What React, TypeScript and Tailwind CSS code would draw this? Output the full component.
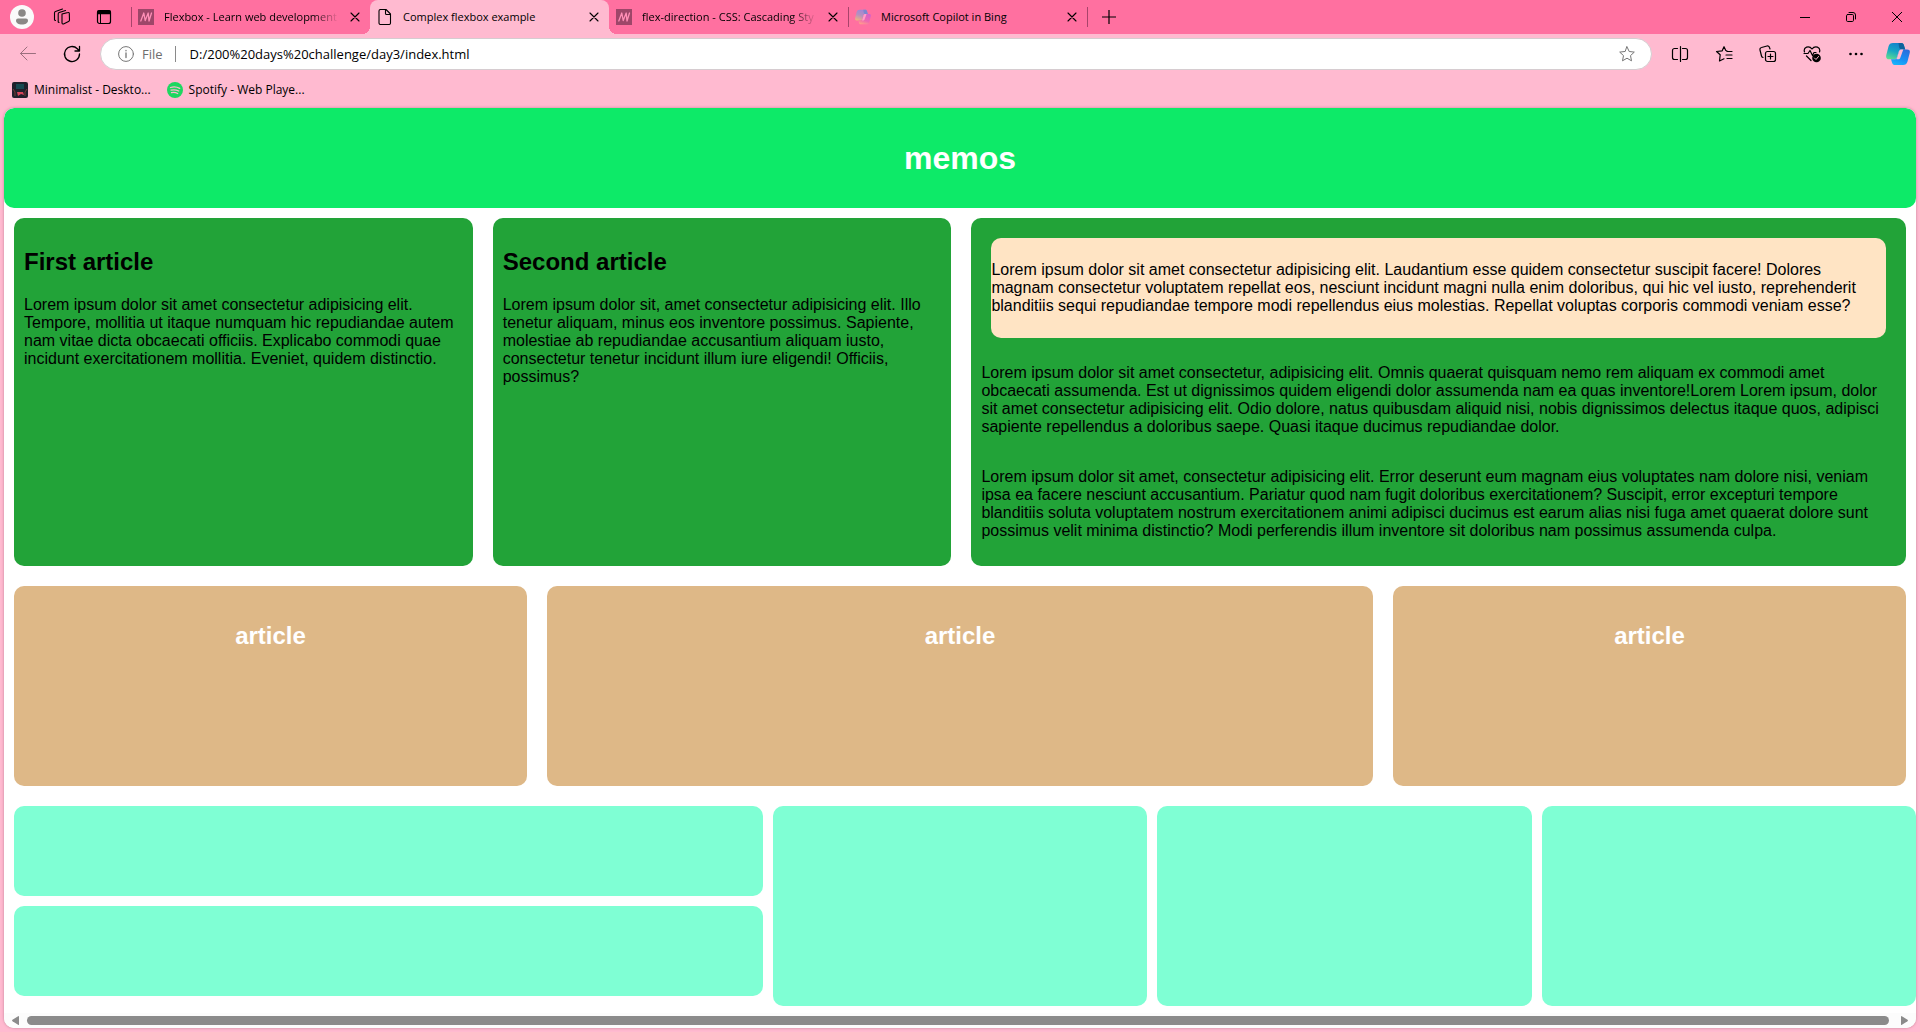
import React from "react";

const fade = "[mask-image:linear-gradient(to_right,black_85%,transparent)]";

function Svg({ size = 20, children, className = "" }: { size?: number; children: React.ReactNode; className?: string }) {
  return (
    <svg width={size} height={size} viewBox={`0 0 ${size} ${size}`} fill="none" stroke="currentColor" strokeWidth="1" strokeLinecap="round" strokeLinejoin="round" className={`shrink-0 ${className}`} aria-hidden="true">
      {children}
    </svg>
  );
}

function MdnIcon() {
  return (
    <Svg size={16} className="bg-[#9e4669]">
      <path d="M2.800 12L5.800 4l1.400 7.500L10.200 4l.8 8L13.500 4" stroke="#ff8fb7" strokeWidth="1.300" />
    </Svg>
  );
}

function FileIcon() {
  return (
    <Svg size={16}>
      <path d="M3.500 .500h5.500l4.500 4.500v9a1.500 1.500 0 0 1-1.500 1.500H3.500A1.500 1.500 0 0 1 2 14V2A1.500 1.500 0 0 1 3.500 .500zM8.500 .500V4.500a1 1 0 0 0 1 1h4" strokeWidth="1.100" />
    </Svg>
  );
}

function CopilotIcon({ size, faded = false }: { size: number; faded?: boolean }) {
  const id = faded ? "tab" : "bar";
  return (
    <svg width={size} height={size} viewBox="0 0 24 24" className="shrink-0" aria-hidden="true">
      <defs>
        <linearGradient id={`${id}-left`} x1="0.6" y1="0" x2="0.2" y2="1">
          <stop offset="0" stopColor={faded ? "#9f86d6" : "#1480cc"} />
          <stop offset="0.5" stopColor={faded ? "#b58fc0" : "#16a6c4"} />
          <stop offset="1" stopColor={faded ? "#efb080" : "#5ddc90"} />
        </linearGradient>
        <linearGradient id={`${id}-right`} x1="0.7" y1="0" x2="0.3" y2="1">
          <stop offset="0" stopColor={faded ? "#d661c8" : "#2a6ddb"} />
          <stop offset="0.6" stopColor={faded ? "#ee68b0" : "#1690f5"} />
          <stop offset="1" stopColor={faded ? "#ff9c8c" : "#18b4fa"} />
        </linearGradient>
      </defs>
      <path d="M11 1h4.500c1.500 0 2 1 2.500 2.500l1.200 4h-3.700c-1.500 0-2.300.7-2.800 2.200L11 15c-.5 1.500-1.500 2.300-3 2.300H3C.5 17.300-.3 15.500.3 13l2.200-8.500C3.200 2 4.500 1 7 1z" fill={`url(#${id}-left)`} />
      <path d="M12.500 1h3c1.500 0 2 1 2.500 2.500l1.200 4h-3.700c-1.300 0-2-.8-2.300-2z" fill={faded ? "#7d86cf" : "#10629b"} />
      <path d="M13 23H8.500C7 23 6.500 22 6 20.500l-1-3.200h3.500c1.500 0 2-.8 2.500-2.300l1.700-5.300c.5-1.500 1.300-2.200 2.800-2.200H21c2.500 0 3.300 1.300 2.700 3.500l-2.200 8.500C20.800 22 19.500 23 17 23z" fill={`url(#${id}-right)`} />
      <path d="M13 9.500c.5-1.400 1.300-2 2.700-2h1.600l-3 8.300c-.4 1-1 1.500-2 1.500h-1.800z" fill={faded ? "#ffa0c8" : "#ffbad0"} />
    </svg>
  );
}

function CloseButton({ label }: { label: string }) {
  return (
    <button aria-label={label} className="grid size-4 shrink-0 place-items-center">
      <Svg size={10}><path d="M1 1l8 8M9 1l-8 8" strokeWidth="1.100" /></Svg>
    </button>
  );
}

function Tab({ icon, title, active = false, fading = false }: { icon: React.ReactNode; title: string; active?: boolean; fading?: boolean }) {
  return (
    <div className={`relative flex h-[34px] w-[239px] items-center px-[7px] ${active ? "rounded-t-lg bg-[#ffbad0]" : ""}`}>
      {active && (
        <>
          <span className="absolute bottom-0 -left-2 size-2 bg-[radial-gradient(circle_at_top_left,transparent_8px,#ffbad0_8px)]" />
          <span className="absolute -right-2 bottom-0 size-2 bg-[radial-gradient(circle_at_top_right,transparent_8px,#ffbad0_8px)]" />
        </>
      )}
      {icon}
      <a href="#" className={`ml-2.5 min-w-0 flex-1 whitespace-nowrap ${fading ? fade : ""}`}>{title}</a>
      <span className="w-2" />
      <CloseButton label={`Close ${title}`} />
    </div>
  );
}

function Divider() {
  return <span className="-mr-px h-5 w-px shrink-0 bg-[#a8446b]" />;
}

function ToolButton({ label, children }: { label: string; children: React.ReactNode }) {
  return <button aria-label={label} className="grid h-8 w-11 place-items-center">{children}</button>;
}

function TabStrip() {
  return (
    <div className="flex h-[34px] items-center bg-[#ff70a0] pl-2.5 text-[11px]">
      <button aria-label="Profile" className="grid size-6 place-items-center rounded-full bg-[#fafafa]">
        <svg width="14" height="16" viewBox="0 0 14 16" fill="#8a8886"><circle cx="7" cy="4" r="3.800" /><path d="M1 11.500a2 2 0 0 1 2-2h8a2 2 0 0 1 2 2c0 2.500-2.500 4-6 4s-6-1.500-6-4z" /></svg>
      </button>
      <button aria-label="Workspaces" className="ml-[18px] grid size-5 place-items-center">
        <Svg size={18}>
          <path d="M9 6l6-1.500a1 1 0 0 1 1.300 1L16.500 12a1.500 1.500 0 0 1-1 1.500L10.500 16A1.200 1.200 0 0 1 9 15zM6 14.500L5.200 14V6A1.500 1.500 0 0 1 6.200 4.500L12.500 2.500M2.500 12.500L1.500 12V5A1.500 1.500 0 0 1 2.500 3.500L9.500 1" strokeWidth="1.100" />
        </Svg>
      </button>
      <button aria-label="Tab actions" className="ml-[22px] grid size-5 place-items-center">
        <Svg size={16}><rect x="1.500" y="1.500" width="13" height="13" rx="2" strokeWidth="1.200" /><path d="M2 2h12v2.500H2z" strokeWidth="1.300" fill="currentColor" /><path d="M4.500 5v9" /></Svg>
      </button>
      <span className="w-[17px]" />
      <Divider />
      <div className="flex items-center">
        <Tab icon={<MdnIcon />} title="Flexbox - Learn web development" fading />
        <Tab icon={<FileIcon />} title="Complex flexbox example" active />
        <Tab icon={<MdnIcon />} title="flex-direction - CSS: Cascading Sty" fading />
        <Divider />
        <Tab icon={<CopilotIcon size={16} faded />} title="Microsoft Copilot in Bing" />
        <Divider />
      </div>
      <button aria-label="New tab" className="ml-3.5 grid size-4 place-items-center"><Svg size={14}><path d="M7 0v14M0 7h14" strokeWidth="1.200" /></Svg></button>
      <div className="ml-auto flex">
        <button aria-label="Minimize" className="grid h-8 w-[46px] place-items-center"><Svg size={10}><path d="M0 5.500h10" /></Svg></button>
        <button aria-label="Restore" className="grid h-8 w-[46px] place-items-center"><Svg size={10}><rect x=".5" y="2.500" width="7" height="7" rx="1.200" /><path d="M3 .5h4A2.500 2.500 0 0 1 9.500 3v4" /></Svg></button>
        <button aria-label="Close window" className="grid h-8 w-[46px] place-items-center"><Svg size={10}><path d="M0 0l10 10M10 0L0 10" /></Svg></button>
      </div>
    </div>
  );
}

function AddressBar() {
  return (
    <div className="flex h-10 items-center pl-[18px]">
      <button aria-label="Back" className="text-[#9b6f7e]"><Svg><path d="M17.500 9.500H2.500M9 3L2.500 9.500 9 16" /></Svg></button>
      <button aria-label="Refresh" className="ml-6"><Svg><path d="M17.500 10a7.500 7.500 0 1 1-2.200-5.300L17.500 7M17.500 2.500V7H13" strokeWidth="1.300" /></Svg></button>
      <div className="ml-[18px] flex h-8 flex-1 items-center rounded-full border border-[#d6ccd0] bg-white pl-[17px] pr-4 text-sm">
        <span className="text-[#767676]"><Svg size={16}><circle cx="8" cy="8" r="7.400" /><path d="M8 7v4.500M8 4.500v.3" strokeWidth="1.300" /></Svg></span>
        <label htmlFor="address" className="ml-2 text-[13px] text-[#6e6e6e]">File</label>
        <span className="ml-3 h-4 w-px bg-[#8a8a8a]" />
        <input id="address" className="ml-3.5 min-w-0 flex-1 bg-transparent text-[13px] text-black outline-none" defaultValue="D:/200%20days%20challenge/day3/index.html" />
        <button aria-label="Add to favorites" className="text-[#767676]"><Svg size={16}><path d="M8 .800l2.200 4.700 5.100.6-3.800 3.500 1 5.200L8 12.200l-4.500 2.600 1-5.200L.7 6.100l5.100-.6z" /></Svg></button>
      </div>
      <div className="ml-1.5 flex">
        <ToolButton label="Split screen"><Svg size={18}><path d="M6.500 3.500H3.500a2 2 0 0 0-2 2v7a2 2 0 0 0 2 2h3M11.500 3.500h3a2 2 0 0 1 2 2v7a2 2 0 0 1-2 2h-3M9.500 1.500v15" strokeWidth="1.200" /></Svg></ToolButton>
        <ToolButton label="Favorites"><Svg size={18}><path d="M12 6L10.800 5.500 9 1.700 7.200 5.800 1.500 6.500 5.200 9.800 4.500 16 9 13.800M12 6.500h5M11 10h6M12 13.500h5" strokeWidth="1.200" /></Svg></ToolButton>
        <ToolButton label="Collections"><Svg size={18}><rect x="6.500" y="6.500" width="10" height="10" rx="2" strokeWidth="1.200" /><path d="M11.500 9v5M9 11.500h5M4 12.500a2 2 0 0 1-1.500-1.500L1 5a2 2 0 0 1 1.500-2.500L8 1a2 2 0 0 1 2.500 1.500L11 4" strokeWidth="1.200" /></Svg></ToolButton>
        <ToolButton label="Browser essentials"><Svg size={18}><path d="M1.500 7C0 2 6 0 9 4c3-4 9-2 7.500 3M1 8.500h4l2-3 2.500 5L11 7.500h2M3.500 11l4.500 4.500" strokeWidth="1.200" /><circle cx="13.500" cy="13" r="4.300" fill="currentColor" stroke="none" /><path d="M11.500 13l1.500 1.500 2.500-3" stroke="#ffbad0" /></Svg></ToolButton>
        <ToolButton label="Settings and more"><Svg size={16}><g fill="currentColor" stroke="none"><circle cx="2.500" cy="8" r="1.300" /><circle cx="8" cy="8" r="1.300" /><circle cx="13.500" cy="8" r="1.300" /></g></Svg></ToolButton>
        <button aria-label="Copilot" className="mr-0.5 grid h-8 w-10 place-items-center"><CopilotIcon size={24} /></button>
      </div>
    </div>
  );
}

function Bookmarks() {
  return (
    <nav className="flex h-[34px] items-center gap-4 pb-0.5 pl-3">
      <a href="#" className="flex items-center gap-1.5">
        <svg width="16" height="16" viewBox="0 0 16 16" aria-hidden="true"><rect width="16" height="16" rx="2" fill="#20202c" /><path d="M4 2h8v5H4z" fill="#174951" /><path d="M1 7l2 3v4M15 7l-2 3v4" stroke="#783a35" fill="none" /><path d="M5 10h6l1 3-3-1-3 2z" fill="#d8445a" /></svg>
        Minimalist - Deskto...
      </a>
      <a href="#" className="flex items-center gap-1.5">
        <svg width="16" height="16" viewBox="0 0 16 16" fill="none" strokeLinecap="round" aria-hidden="true"><circle cx="8" cy="8" r="8" fill="#1ed760" /><path d="M3.500 5.500c3-.9 6.500-.6 9.200.9M4 8.200c2.600-.7 5.300-.4 7.700.8M4.500 10.700c2-.5 4.200-.3 6.200.8" stroke="#ffbad0" strokeWidth="1.300" /></svg>
        Spotify - Web Playe...
      </a>
    </nav>
  );
}

function Article({ title, children }: { title: string; children: React.ReactNode }) {
  return (
    <article className="min-w-0 flex-1 rounded-[10px] bg-[#22a338] px-2.5 pt-[30px]">
      <h2 className="text-2xl leading-7 font-bold">{title}</h2>
      <p className="mt-5">{children}</p>
    </article>
  );
}

function Page() {
  return (
    <main className="mx-1 mb-1 flex-1 overflow-hidden rounded-[10px] bg-white font-['Liberation_Sans',Arial,sans-serif] text-base leading-[18px] text-black shadow-[0_0_3px_#c47f96]">
      <header className="grid h-[100px] place-items-center rounded-[10px] bg-[#0dea68]">
        <h1 className="text-[32px] leading-9 font-bold text-white">memos</h1>
      </header>
      <section className="mx-2.5 mt-2.5 flex gap-5">
        <Article title="First article">Lorem ipsum dolor sit amet consectetur adipisicing elit. Tempore, mollitia ut itaque numquam hic repudiandae autem nam vitae dicta obcaecati officiis. Explicabo commodi quae incidunt exercitationem mollitia. Eveniet, quidem distinctio.</Article>
        <Article title="Second article">Lorem ipsum dolor sit, amet consectetur adipisicing elit. Illo tenetur aliquam, minus eos inventore possimus. Sapiente, molestiae ab repudiandae accusantium aliquam iusto, consectetur tenetur incidunt illum iure eligendi! Officiis, possimus?</Article>
        <article className="w-[49.4%] shrink-0 rounded-[10px] bg-[#22a338] px-2.5 pt-5 pb-[26px]">
          <div className="mx-2.5 h-[100px] rounded-[10px] bg-[#ffe4c4] pt-[23px]">
            <p>Lorem ipsum dolor sit amet consectetur adipisicing elit. Laudantium esse quidem consectetur suscipit facere! Dolores magnam consectetur voluptatem repellat eos, nesciunt incidunt magni nulla enim doloribus, qui hic vel iusto, reprehenderit blanditiis sequi repudiandae tempore modi repellendus eius molestias. Repellat voluptas corporis commodi veniam esse?</p>
          </div>
          <p className="mt-[26px]">Lorem ipsum dolor sit amet consectetur, adipisicing elit. Omnis quaerat quisquam nemo rem aliquam ex commodi amet obcaecati assumenda. Est ut dignissimos quidem eligendi dolor assumenda nam ea quas inventore!Lorem Lorem ipsum, dolor sit amet consectetur adipisicing elit. Odio dolore, natus quibusdam aliquid nisi, nobis dignissimos delectus itaque quos, adipisci sapiente repellendus a doloribus saepe. Quasi itaque ducimus repudiandae dolor.</p>
          <p className="mt-8">Lorem ipsum dolor sit amet, consectetur adipisicing elit. Error deserunt eum magnam eius voluptates nam dolore nisi, veniam ipsa ea facere nesciunt accusantium. Pariatur quod nam fugit doloribus exercitationem? Suscipit, error excepturi tempore blanditiis soluta voluptatem nostrum exercitationem animi adipisci ducimus est earum alias nisi fuga amet quaerat dolore sunt possimus velit minima distinctio? Modi perferendis illum inventore sit doloribus nam possimus assumenda culpa.</p>
        </article>
      </section>
      <section className="mx-2.5 mt-5 grid grid-cols-[513fr_826fr_513fr] gap-5">
        {[0, 1, 2].map((i) => (
          <article key={i} className="h-[200px] rounded-[10px] bg-[#deb887] pt-9 text-center">
            <h2 className="text-2xl leading-7 font-bold text-white">article</h2>
          </article>
        ))}
      </section>
      <section className="mt-5 ml-2.5 grid h-[200px] grid-cols-[2fr_1fr_1fr_1fr] gap-2.5">
        <div className="flex flex-col gap-2.5">
          <div className="h-[90px] rounded-[10px] bg-[#7fffd4]" />
          <div className="h-[90px] rounded-[10px] bg-[#7fffd4]" />
        </div>
        <div className="rounded-[10px] bg-[#7fffd4]" />
        <div className="rounded-[10px] bg-[#7fffd4]" />
        <div className="rounded-[10px] bg-[#7fffd4]" />
      </section>
      <div className="mt-[7px] flex h-[15px] items-center bg-[#fcfcfc] px-2 text-[#8b8b8b]">
        <svg width="7" height="9" viewBox="0 0 7 9" fill="currentColor"><path d="M7 1v7.500q0 .5-.5.500L.5 5.300q-.8-.8 0-1.500L6.500 0q.5 0 .5 1z" /></svg>
        <div role="scrollbar" aria-orientation="horizontal" aria-controls="root" aria-valuenow={0} className="mr-3 ml-2 h-[9px] flex-1 rounded-full bg-[#8b8b8b]" />
        <svg width="7" height="9" viewBox="0 0 7 9" fill="currentColor"><path d="M0 1v7.500q0 .5.5.500L6.500 5.300q.8-.8 0-1.500L.5 0Q0 0 0 1z" /></svg>
      </div>
    </main>
  );
}

export default function App() {
  return (
    <div className="flex min-h-screen flex-col bg-[#ffbad0] font-['Open_Sans','Noto_Sans',sans-serif] text-xs text-black">
      <TabStrip />
      <AddressBar />
      <Bookmarks />
      <Page />
    </div>
  );
}
